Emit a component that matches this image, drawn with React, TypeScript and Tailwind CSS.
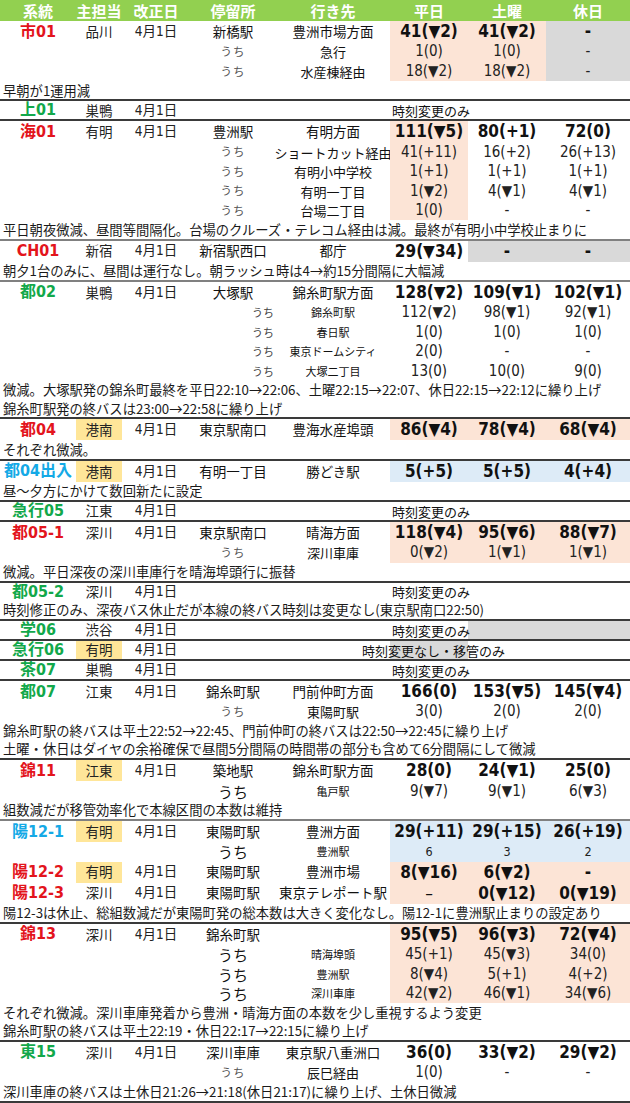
import React from 'react';

type Bg = 'p' | 'g' | 'b' | '';
type Color = 'r' | 'g' | 'b';
type MainRow = { k: 'm'; name: string; c: Color; t: string; y?: boolean; stop?: string; dest?: string; v: [string, string, string]; bg: Bg[]; sep?: 'd' | 'l' | 'n' };
type TextRow = { k: 't'; name: string; c: Color; t: string; y?: boolean; text: string; wide?: boolean; bg: Bg[]; thin?: boolean };
type SubRow = { k: 's'; u: 'n' | 'r' | 'b'; d: string; ds?: 's' | 'n'; v: [string, string, string]; bg: Bg[]; vs?: 's' };
type NoteRow = { k: 'n'; text: string };
type Row = MainRow | TextRow | SubRow | NoteRow;

const GRID = 'grid grid-cols-[76px_46px_68px_86px_114px_78px_78px_84px] leading-none';
const JP = "font-[family-name:'Noto_Sans_CJK_JP',sans-serif]";
const NUM = "font-[family-name:'DejaVu_Sans_Condensed','Liberation_Sans_Narrow','Noto_Sans_CJK_JP',sans-serif]";
const NAME: Record<Color, string> = { r: 'text-[#e3141c]', g: 'text-[#12a84a]', b: 'text-[#14a9e6]' };
const BG: Record<string, string> = { p: 'bg-[#fce4d6]', g: 'bg-[#d9d9d9]', b: 'bg-[#ddebf7]', '': '' };
const VCOL = ['col-start-6', 'col-start-7', 'col-start-8'];

const rows: Row[] = [
  { k: 'm', name: '市01', c: 'r', t: '品川', stop: '新橋駅', dest: '豊洲市場方面', v: ['41(▼2)', '41(▼2)', '-'], bg: ['p', 'p', 'g'], sep: 'n' },
  { k: 's', u: 'n', d: '急行', v: ['1(0)', '1(0)', '-'], bg: ['p', 'p', 'g'] },
  { k: 's', u: 'n', d: '水産棟経由', v: ['18(▼2)', '18(▼2)', '-'], bg: ['p', 'p', 'g'] },
  { k: 'n', text: '早朝が1運用減' },
  { k: 't', name: '上01', c: 'g', t: '巣鴨', text: '時刻変更のみ', bg: ['', '', ''] },
  { k: 'm', name: '海01', c: 'r', t: '有明', stop: '豊洲駅', dest: '有明方面', v: ['111(▼5)', '80(+1)', '72(0)'], bg: ['p', '', ''] },
  { k: 's', u: 'n', d: 'ショートカット経由', v: ['41(+11)', '16(+2)', '26(+13)'], bg: ['p', '', ''] },
  { k: 's', u: 'n', d: '有明小中学校', v: ['1(+1)', '1(+1)', '1(+1)'], bg: ['p', '', ''] },
  { k: 's', u: 'n', d: '有明一丁目', v: ['1(▼2)', '4(▼1)', '4(▼1)'], bg: ['p', '', ''] },
  { k: 's', u: 'n', d: '台場二丁目', v: ['1(0)', '-', '-'], bg: ['p', '', ''] },
  { k: 'n', text: '平日朝夜微減、昼間等間隔化。台場のクルーズ・テレコム経由は減。最終が有明小中学校止まりに' },
  { k: 'm', name: 'CH01', c: 'r', t: '新宿', stop: '新宿駅西口', dest: '都庁', v: ['29(▼34)', '-', '-'], bg: ['', 'g', 'g'], sep: 'l' },
  { k: 'n', text: '朝夕1台のみに、昼間は運行なし。朝ラッシュ時は4→約15分間隔に大幅減' },
  { k: 'm', name: '都02', c: 'g', t: '巣鴨', stop: '大塚駅', dest: '錦糸町駅方面', v: ['128(▼2)', '109(▼1)', '102(▼1)'], bg: ['', '', ''], sep: 'l' },
  { k: 's', u: 'r', d: '錦糸町駅', ds: 's', v: ['112(▼2)', '98(▼1)', '92(▼1)'], bg: ['', '', ''] },
  { k: 's', u: 'r', d: '春日駅', ds: 's', v: ['1(0)', '1(0)', '1(0)'], bg: ['', '', ''] },
  { k: 's', u: 'r', d: '東京ドームシティ', ds: 's', v: ['2(0)', '-', '-'], bg: ['', '', ''] },
  { k: 's', u: 'r', d: '大塚二丁目', ds: 's', v: ['13(0)', '10(0)', '9(0)'], bg: ['', '', ''] },
  { k: 'n', text: '微減。大塚駅発の錦糸町最終を平日22:10→22:06、土曜22:15→22:07、休日22:15→22:12に繰り上げ' },
  { k: 'n', text: '錦糸町駅発の終バスは23:00→22:58に繰り上げ' },
  { k: 'm', name: '都04', c: 'r', t: '港南', y: true, stop: '東京駅南口', dest: '豊海水産埠頭', v: ['86(▼4)', '78(▼4)', '68(▼4)'], bg: ['p', 'p', 'p'] },
  { k: 'n', text: 'それぞれ微減。' },
  { k: 'm', name: '都04出入', c: 'b', t: '港南', y: true, stop: '有明一丁目', dest: '勝どき駅', v: ['5(+5)', '5(+5)', '4(+4)'], bg: ['b', 'b', 'b'] },
  { k: 'n', text: '昼～夕方にかけて数回新たに設定' },
  { k: 't', name: '急行05', c: 'g', t: '江東', text: '時刻変更のみ', bg: ['', '', ''] },
  { k: 'm', name: '都05-1', c: 'r', t: '深川', stop: '東京駅南口', dest: '晴海方面', v: ['118(▼4)', '95(▼6)', '88(▼7)'], bg: ['p', 'p', 'p'] },
  { k: 's', u: 'n', d: '深川車庫', v: ['0(▼2)', '1(▼1)', '1(▼1)'], bg: ['p', 'p', 'p'] },
  { k: 'n', text: '微減。平日深夜の深川車庫行を晴海埠頭行に振替' },
  { k: 't', name: '都05-2', c: 'g', t: '深川', text: '時刻変更のみ', bg: ['', '', ''] },
  { k: 'n', text: '時刻修正のみ、深夜バス休止だが本線の終バス時刻は変更なし(東京駅南口22:50)' },
  { k: 't', name: '学06', c: 'g', t: '渋谷', text: '時刻変更のみ', bg: ['', 'g', 'g'] },
  { k: 't', name: '急行06', c: 'g', t: '有明', y: true, text: '時刻変更なし・移管のみ', wide: true, bg: ['g', '', ''] },
  { k: 't', name: '茶07', c: 'g', t: '巣鴨', text: '時刻変更のみ', bg: ['', '', ''] },
  { k: 'm', name: '都07', c: 'g', t: '江東', stop: '錦糸町駅', dest: '門前仲町方面', v: ['166(0)', '153(▼5)', '145(▼4)'], bg: ['', '', ''] },
  { k: 's', u: 'n', d: '東陽町駅', v: ['3(0)', '2(0)', '2(0)'], bg: ['', '', ''] },
  { k: 'n', text: '錦糸町駅の終バスは平土22:52→22:45、門前仲町の終バスは22:50→22:45に繰り上げ' },
  { k: 'n', text: '土曜・休日はダイヤの余裕確保で昼間5分間隔の時間帯の部分も含めて6分間隔にして微減' },
  { k: 'm', name: '錦11', c: 'r', t: '江東', y: true, stop: '築地駅', dest: '錦糸町駅方面', v: ['28(0)', '24(▼1)', '25(0)'], bg: ['', '', ''] },
  { k: 's', u: 'b', d: '亀戸駅', ds: 's', v: ['9(▼7)', '9(▼1)', '6(▼3)'], bg: ['', '', ''] },
  { k: 'n', text: '組数減だが移管効率化で本線区間の本数は維持' },
  { k: 'm', name: '陽12-1', c: 'b', t: '有明', y: true, stop: '東陽町駅', dest: '豊洲方面', v: ['29(+11)', '29(+15)', '26(+19)'], bg: ['b', 'b', 'b'], sep: 'l' },
  { k: 's', u: 'b', d: '豊洲駅', ds: 's', v: ['6', '3', '2'], bg: ['b', 'b', 'b'], vs: 's' },
  { k: 'm', name: '陽12-2', c: 'r', t: '有明', y: true, stop: '東陽町駅', dest: '豊洲市場', v: ['8(▼16)', '6(▼2)', '-'], bg: ['p', 'p', 'p'], sep: 'n' },
  { k: 'm', name: '陽12-3', c: 'r', t: '深川', stop: '東陽町駅', dest: '東京テレポート駅', v: ['–', '0(▼12)', '0(▼19)'], bg: ['p', 'p', 'p'], sep: 'n' },
  { k: 'n', text: '陽12-3は休止、総組数減だが東陽町発の総本数は大きく変化なし。陽12-1に豊洲駅止まりの設定あり' },
  { k: 'm', name: '錦13', c: 'r', t: '深川', stop: '錦糸町駅', dest: '', v: ['95(▼5)', '96(▼3)', '72(▼4)'], bg: ['p', 'p', 'p'] },
  { k: 's', u: 'b', d: '晴海埠頭', ds: 's', v: ['45(+1)', '45(▼3)', '34(0)'], bg: ['p', 'p', 'p'] },
  { k: 's', u: 'b', d: '豊洲駅', ds: 's', v: ['8(▼4)', '5(+1)', '4(+2)'], bg: ['p', 'p', 'p'] },
  { k: 's', u: 'b', d: '深川車庫', ds: 's', v: ['42(▼2)', '46(▼1)', '34(▼6)'], bg: ['p', 'p', 'p'] },
  { k: 'n', text: 'それぞれ微減。深川車庫発着から豊洲・晴海方面の本数を少し重視するよう変更' },
  { k: 'n', text: '錦糸町駅の終バスは平土22:19・休日22:17→22:15に繰り上げ' },
  { k: 'm', name: '東15', c: 'g', t: '深川', stop: '深川車庫', dest: '東京駅八重洲口', v: ['36(0)', '33(▼2)', '29(▼2)'], bg: ['', '', ''] },
  { k: 's', u: 'n', d: '辰巳経由', v: ['1(0)', '-', '-'], bg: ['', '', ''] },
  { k: 'n', text: '深川車庫の終バスは土休日21:26→21:18(休日21:17)に繰り上げ、土休日微減' },
];

function NameCell({ name, c }: { name: string; c: Color }) {
  return (
    <div className={`col-start-1 row-start-1 flex items-center justify-center whitespace-nowrap text-[16px] font-semibold ${NUM} ${NAME[c]}`}>
      {name}
    </div>
  );
}

function Tanto({ t, y }: { t: string; y?: boolean }) {
  return (
    <div className={`col-start-2 row-start-1 flex items-center justify-center text-[13.5px] text-[#222] ${JP} ${y ? 'bg-[#ffe699]' : ''}`}>{t}</div>
  );
}

function DateCell() {
  return (
    <div className={`col-start-3 row-start-1 flex items-center justify-center text-[13.5px] text-[#222] ${NUM}`}>4月1日</div>
  );
}

function Main({ r }: { r: MainRow }) {
  const sep =
    r.sep === 'n'
      ? 'h-[21px]'
      : r.sep === 'l'
      ? 'h-[23px] border-t-2 border-[#808080]'
      : 'h-[23px] border-t-2 border-[#3a3a3a]';
  return (
    <div className={`${GRID} ${sep}`}>
      <NameCell name={r.name} c={r.c} />
      <Tanto t={r.t} y={r.y} />
      <DateCell />
      <div className={`col-start-4 row-start-1 flex items-center justify-center whitespace-nowrap text-[13.5px] text-[#111] ${JP}`}>{r.stop}</div>
      <div className={`col-start-5 row-start-1 flex items-center justify-center whitespace-nowrap text-[13.5px] text-[#111] ${JP}`}>{r.dest}</div>
      {r.v.map((v, i) => (
        <div
          key={i}
          className={`${VCOL[i]} row-start-1 flex items-center justify-center whitespace-nowrap text-[17px] text-[#111] ${NUM} ${v === '–' ? 'font-normal text-[15px]' : 'font-bold'} ${BG[r.bg[i]]}`}
        >
          {v}
        </div>
      ))}
    </div>
  );
}

function TextR({ r }: { r: TextRow }) {
  return (
    <div className={`${GRID} h-[20px] border-t-2 border-[#3a3a3a]`}>
      <NameCell name={r.name} c={r.c} />
      <Tanto t={r.t} y={r.y} />
      <DateCell />
      {r.bg.map((b, i) => (b ? <div key={i} className={`${VCOL[i]} row-start-1 ${BG[b]}`} /> : null))}
      <div
        className={`col-start-4 col-end-9 row-start-1 flex items-center whitespace-nowrap text-[13px] text-[#111] ${JP} ${r.wide ? 'pl-[172px]' : 'pl-[202px]'}`}
      >
        {r.text}
      </div>
    </div>
  );
}

function Sub({ r }: { r: SubRow }) {
  const uchi =
    r.u === 'n'
      ? 'justify-center text-[11.5px] text-[#555] tracking-[1px]'
      : r.u === 'r'
      ? 'justify-end pr-[2px] text-[11px] text-[#444]'
      : 'justify-center text-[15px] text-[#111]';
  return (
    <div className={`${GRID} h-[19.5px]`}>
      <div className={`col-start-4 row-start-1 flex items-center ${uchi} ${JP}`}>うち</div>
      <div className={`col-start-5 row-start-1 flex items-center justify-center whitespace-nowrap text-[#111] ${JP} ${r.ds === 's' ? 'text-[11px]' : 'text-[13px]'}`}>
        {r.d}
      </div>
      {r.v.map((v, i) => (
        <div
          key={i}
          className={`${VCOL[i]} row-start-1 flex items-center justify-center whitespace-nowrap text-[#222] ${NUM} ${r.vs === 's' ? 'text-[12.5px]' : 'text-[15px]'} ${BG[r.bg[i]]}`}
        >
          {v}
        </div>
      ))}
    </div>
  );
}

function Note({ r }: { r: NoteRow }) {
  return (
    <div className={`flex h-[18.3px] items-center whitespace-nowrap pl-[3px] text-[13.3px] leading-none text-[#1a1a1a] ${JP}`}>{r.text}</div>
  );
}

export default function App() {
  const headers = ['系統', '主担当', '改正日', '停留所', '行き先', '平日', '土曜', '休日'];
  return (
    <div className="w-[630px] h-[1103px] overflow-hidden bg-white">
      <div className={`${GRID} h-[21px] bg-[#92d050]`}>
        {headers.map((h) => (
          <div key={h} className={`flex items-center justify-center text-[15px] font-bold text-white ${JP}`}>
            {h}
          </div>
        ))}
      </div>
      {rows.map((r, i) => {
        if (r.k === 'm') return <Main key={i} r={r} />;
        if (r.k === 't') return <TextR key={i} r={r} />;
        if (r.k === 's') return <Sub key={i} r={r} />;
        return <Note key={i} r={r} />;
      })}
      <div className="h-[2px] bg-[#3a3a3a]" />
      <div className="h-[2px] w-[76px] bg-[#92d050]" />
    </div>
  );
}
